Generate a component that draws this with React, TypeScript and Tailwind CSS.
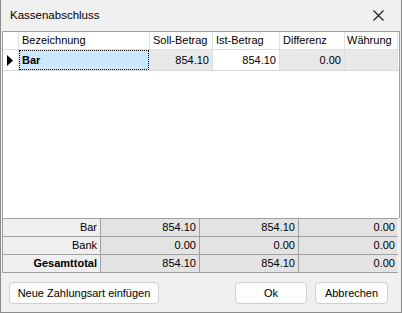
const font = "font-['Liberation_Sans',Arial,sans-serif]";

const totals = [
  { label: 'Bar', soll: '854.10', ist: '854.10', diff: '0.00', bold: false },
  { label: 'Bank', soll: '0.00', ist: '0.00', diff: '0.00', bold: false },
  { label: 'Gesamttotal', soll: '854.10', ist: '854.10', diff: '0.00', bold: true },
];

const App = () => {
  return (
    <div className={`w-[402px] h-[313px] bg-[#f0f0f0] border-x border-b border-[#8c8c8c] flex flex-col text-[11px] text-black ${font}`}>
      {/* title bar */}
      <div className="h-[31px] flex items-center justify-between pl-[9px] pr-[17px]">
        <span className="text-[11.5px]">Kassenabschluss</span>
        <svg width="11" height="11" viewBox="0 0 11 11">
          <path d="M0.5 0.5 L10.5 10.5 M10.5 0.5 L0.5 10.5" stroke="#1a1a1a" strokeWidth="1.1" />
        </svg>
      </div>

      <div className="ml-[1px] w-[398px] flex flex-col">
        {/* grid */}
        <div className="h-[187px] bg-white border-l border-r border-t border-[#a0a0a0] flex flex-col">
          <div className="h-[18px] flex border-b border-[#e0e0e0]">
            <div className="w-[16px] border-r border-[#e0e0e0]" />
            <div className="w-[131px] border-r border-[#e0e0e0] pl-[3px] flex items-center">Bezeichnung</div>
            <div className="w-[63px] border-r border-[#e0e0e0] pl-[3px] flex items-center">Soll-Betrag</div>
            <div className="w-[67px] border-r border-[#e0e0e0] pl-[3px] flex items-center">Ist-Betrag</div>
            <div className="w-[65px] border-r border-[#e0e0e0] pl-[3px] flex items-center">Differenz</div>
            <div className="w-[53px] border-r border-[#e0e0e0] pl-[2px] flex items-center">Währung</div>
          </div>
          <div className="h-[21px] flex border-b border-[#d8d8d8]">
            <div className="w-[16px] border-r border-[#e0e0e0] flex items-center pl-[4px]">
              <svg width="6" height="11" viewBox="0 0 6 11">
                <path d="M0 0 L6 5.5 L0 11 Z" fill="#000" />
              </svg>
            </div>
            <div className="w-[131px] border-r border-[#e0e0e0] bg-[#cce8ff] flex">
              <div className="flex-1 border border-dotted border-black flex items-center pl-[2px] font-bold">Bar</div>
            </div>
            <div className="w-[63px] border-r border-[#e0e0e0] bg-[#e8e8e8] flex items-center justify-end pr-[3px]">854.10</div>
            <div className="w-[67px] border-r border-[#e0e0e0] bg-white flex items-center justify-end pr-[3px]">854.10</div>
            <div className="w-[65px] border-r border-[#e0e0e0] bg-[#e8e8e8] flex items-center justify-end pr-[3px]">0.00</div>
            <div className="w-[53px] border-r border-[#e0e0e0] bg-[#e8e8e8]" />
          </div>
          <div className="flex-1" />
        </div>

        {/* totals */}
        <div className="w-[396px] border-l border-t border-[#a0a0a0] flex flex-col">
          {totals.map((t) => (
            <div key={t.label} className="h-[18px] flex border-b border-[#a0a0a0]">
              <div className={`w-[98px] bg-[#efefef] border-r border-[#a0a0a0] flex items-center justify-end pr-[3px] ${t.bold ? 'font-bold' : ''}`}>
                {t.label}
              </div>
              <div className="w-[99px] bg-[#e3e3e3] border-r border-[#a0a0a0] flex items-center justify-end pr-[3px]">{t.soll}</div>
              <div className="w-[99px] bg-[#e3e3e3] border-r border-[#a0a0a0] flex items-center justify-end pr-[3px]">{t.ist}</div>
              <div className="w-[98px] bg-[#e3e3e3] flex items-center justify-end pr-[2px]">{t.diff}</div>
            </div>
          ))}
        </div>
      </div>

      {/* buttons */}
      <div className="mt-[9px] flex items-center pl-[8px]">
        <button className="w-[150px] h-[22px] rounded-[4px] border border-[#d0d0d0] bg-[#fdfdfd] text-[11px]">
          Neue Zahlungsart einfügen
        </button>
        <button className="ml-auto w-[72px] h-[22px] rounded-[4px] border border-[#d0d0d0] bg-[#fdfdfd] text-[11px]">
          Ok
        </button>
        <button className="ml-[8px] mr-[13px] w-[73px] h-[22px] rounded-[4px] border border-[#d0d0d0] bg-[#fdfdfd] text-[11px]">
          Abbrechen
        </button>
      </div>
    </div>
  );
};

export default App;
